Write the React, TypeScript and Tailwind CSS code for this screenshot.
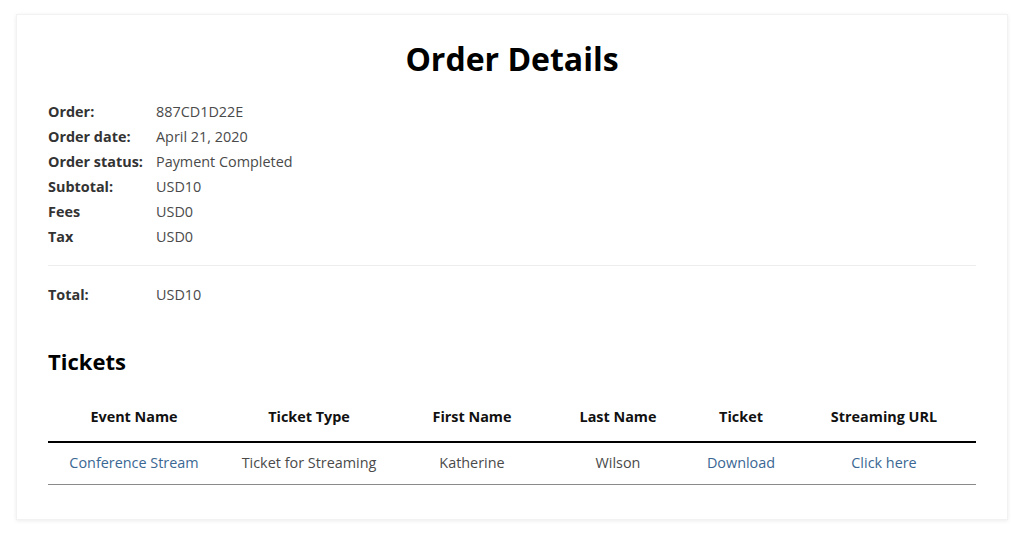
import React from "react";

const rows: [string, string][] = [
  ["Order:", "887CD1D22E"],
  ["Order date:", "April 21, 2020"],
  ["Order status:", "Payment Completed"],
  ["Subtotal:", "USD10"],
  ["Fees", "USD0"],
  ["Tax", "USD0"],
];

export default function App() {
  return (
    <div
      className="min-h-[533px] w-[1024px] bg-white pt-[14px] px-4"
      style={{ fontFamily: '"Open Sans", "Noto Sans", sans-serif' }}
    >
      <div className="h-[506px] bg-white shadow-[0_1px_4px_rgba(0,0,0,0.08)] border border-[#f2f2f2] pl-[31px] pr-[31px] pt-[22px]">
        <h1 className="text-center text-[32px] leading-[44px] font-bold text-black">Order Details</h1>
        <div className="mt-[18px] text-[14.4px] leading-[25px]">
          {rows.map(([k, v]) => (
            <div key={k} className="flex">
              <div className="w-[108px] font-bold text-[#333]">{k}</div>
              <div className="text-[#4a4a4a]">{v}</div>
            </div>
          ))}
        </div>
        <div className="mt-[16px] border-t border-[#ededed]" />
        <div className="mt-[16px] flex text-[14.4px] leading-[25px]">
          <div className="w-[108px] font-bold text-[#333]">Total:</div>
          <div className="text-[#4a4a4a]">USD10</div>
        </div>
        <h2 className="mt-[39px] text-[22px] leading-[30px] font-bold text-black">Tickets</h2>
        <table className="mt-[19px] w-full table-fixed border-collapse text-[14.4px]">
          <colgroup>
            <col className="w-[172px]" />
            <col className="w-[178px]" />
            <col className="w-[148px]" />
            <col className="w-[144px]" />
            <col className="w-[102px]" />
            <col className="w-[184px]" />
          </colgroup>
          <thead>
            <tr className="border-b-2 border-black">
              {["Event Name", "Ticket Type", "First Name", "Last Name", "Ticket", "Streaming URL"].map((h) => (
                <th key={h} className="h-[47px] pb-[2px] text-center font-bold text-[#111]">
                  {h}
                </th>
              ))}
            </tr>
          </thead>
          <tbody>
            <tr className="border-b border-[#8a8a8a]">
              <td className="h-[42px] text-center text-[#3a6793]">Conference Stream</td>
              <td className="text-center text-[#4a4a4a]">Ticket for Streaming</td>
              <td className="text-center text-[#4a4a4a]">Katherine</td>
              <td className="text-center text-[#4a4a4a]">Wilson</td>
              <td className="text-center text-[#3a6793]">Download</td>
              <td className="text-center text-[#3a6793]">Click here</td>
            </tr>
          </tbody>
        </table>
      </div>
    </div>
  );
}
